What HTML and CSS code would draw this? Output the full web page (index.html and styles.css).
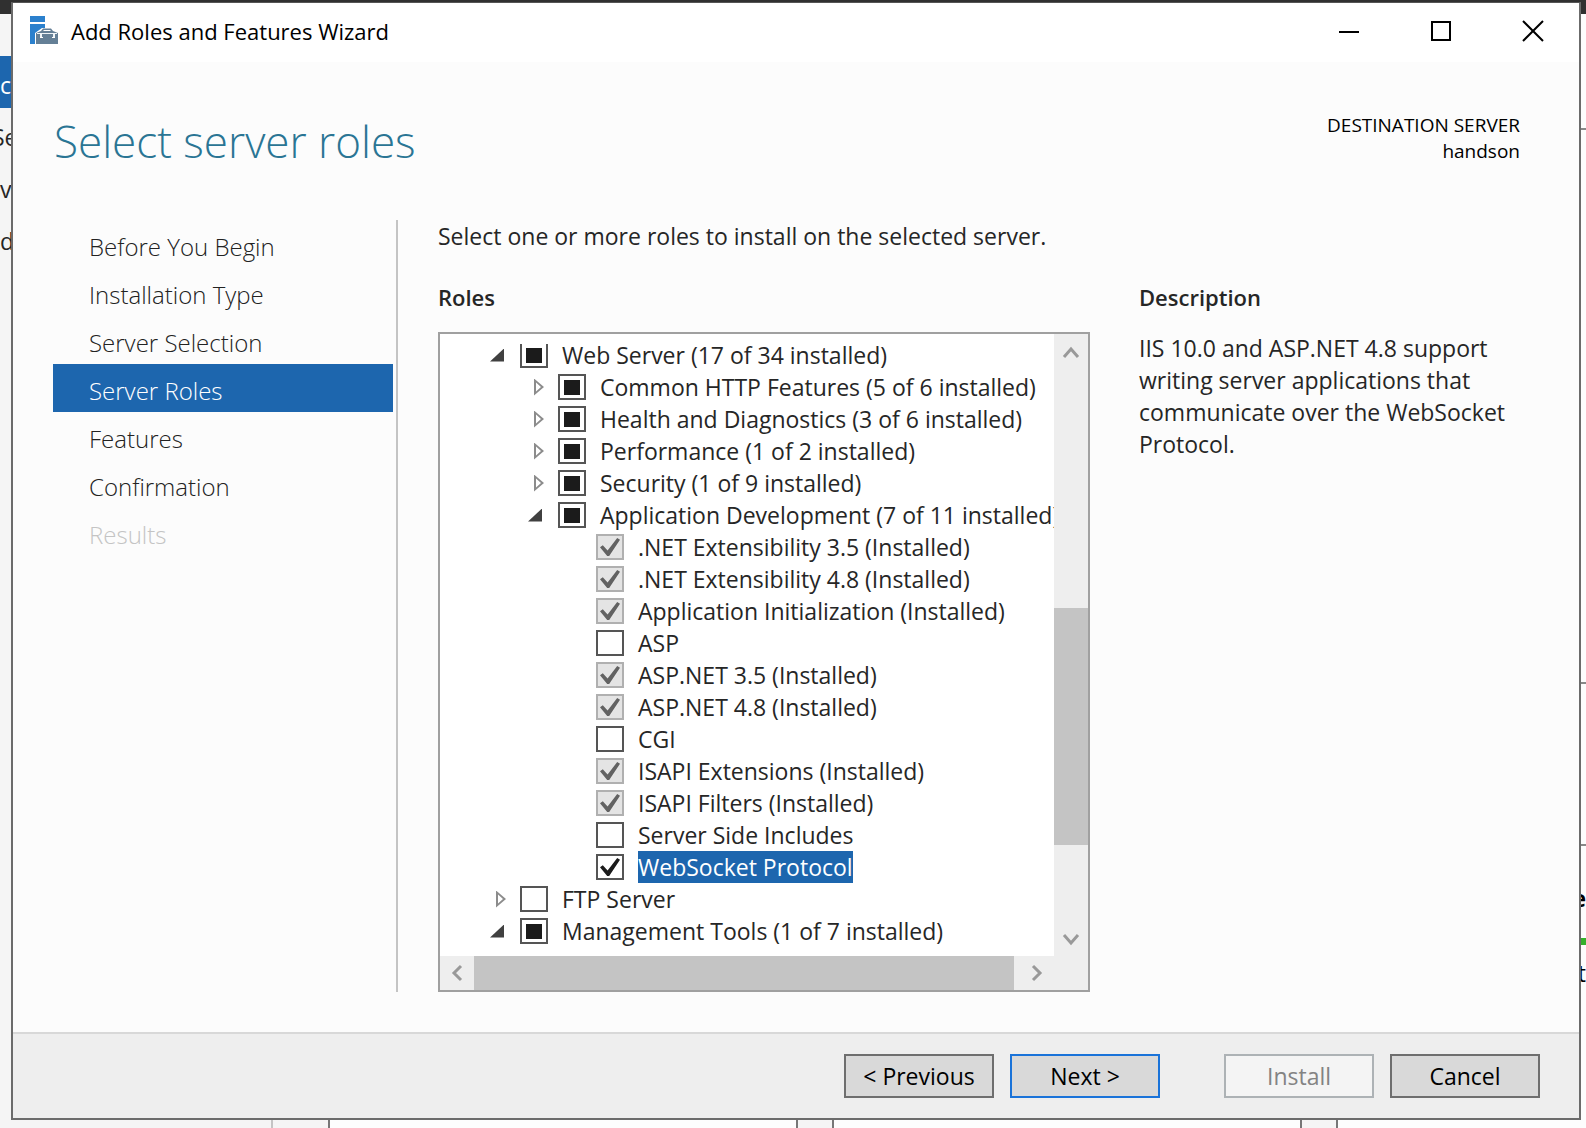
FILE: index.html
```html
<!DOCTYPE html>
<html lang="en">
<head>
<meta charset="utf-8">
<title>Add Roles and Features Wizard</title>
<link rel="stylesheet" href="styles.css">
</head>
<body>
<div class="manager" aria-hidden="true">
  <div class="manager-bar"></div>
  <div class="manager-body">
    <div class="manager-nav">
      <div class="manager-item current">c</div>
      <div class="manager-item wide">Se</div>
      <div class="manager-item">v</div>
      <div class="manager-item">d</div>
    </div>
    <div class="tiles">
      <div class="tile"></div>
      <div class="tile"></div>
      <div class="tile last">
        <div class="band intro"></div>
        <div class="band hero"></div>
        <div class="band gap"></div>
        <div class="band status"><span class="bold">e</span><i class="ok"></i><span>t</span></div>
      </div>
    </div>
  </div>
</div>

<div class="dialog" role="dialog" aria-labelledby="title">
  <header class="titlebar">
    <svg class="app-icon" width="30" height="30" viewBox="0 0 30 30">
      <path fill="#2b80cd" d="M0 0h15v6H0zM0 8h15v4h-3L5 17v11H0z"/>
      <path fill="#647f96" fill-rule="evenodd" d="M6 17l5-2 2-2.500h8l2 2.500 5 2v4H6zM13 15h8l-1-1h-6z"/>
      <path fill="#647f96" d="M6 20h4v2h3v-2h9v2h3v-2h3v8H6z"/>
      <path fill="#eef3f7" d="M7 17h20v1H25v3h-2v-3H12v3h-2v-3H7z"/>
    </svg>
    <span id="title" class="title">Add Roles and Features Wizard</span>
    <div class="window-buttons">
      <button type="button" aria-label="Minimize"><svg width="22" height="22" viewBox="0 0 22 22"><path d="M1 12h20"/></svg></button>
      <button type="button" aria-label="Maximize"><svg width="22" height="22" viewBox="0 0 22 22"><path d="M2 2h18v18H2z"/></svg></button>
      <button type="button" aria-label="Close"><svg width="22" height="22" viewBox="0 0 22 22"><path d="M1 1l20 20M21 1L1 21"/></svg></button>
    </div>
  </header>

  <div class="heading">
    <h1>Select server roles</h1>
    <p class="destination">DESTINATION SERVER<br>handson</p>
  </div>

  <div class="content">
    <nav class="steps">
      <a href="#">Before You Begin</a>
      <a href="#">Installation Type</a>
      <a href="#">Server Selection</a>
      <a href="#" class="active" aria-current="step">Server Roles</a>
      <a href="#">Features</a>
      <a href="#">Confirmation</a>
      <a class="disabled" aria-disabled="true">Results</a>
    </nav>

    <main class="panel">
      <p class="lead">Select one or more roles to install on the selected server.</p>
      <div class="columns">
        <section class="roles">
          <h2>Roles</h2>
          <div class="tree">
            <div class="viewport">
              <ul>
                <li class="l1"><i class="open"></i><label><input type="checkbox" class="partial"><span>Web Server (17 of 34 installed)</span></label></li>
                <li class="l2"><i class="closed"></i><label><input type="checkbox" class="partial"><span>Common HTTP Features (5 of 6 installed)</span></label></li>
                <li class="l2"><i class="closed"></i><label><input type="checkbox" class="partial"><span>Health and Diagnostics (3 of 6 installed)</span></label></li>
                <li class="l2"><i class="closed"></i><label><input type="checkbox" class="partial"><span>Performance (1 of 2 installed)</span></label></li>
                <li class="l2"><i class="closed"></i><label><input type="checkbox" class="partial"><span>Security (1 of 9 installed)</span></label></li>
                <li class="l2"><i class="open"></i><label><input type="checkbox" class="partial"><span>Application Development (7 of 11 installed)</span></label></li>
                <li class="l3"><i></i><label><input type="checkbox" checked disabled><span>.NET Extensibility 3.5 (Installed)</span></label></li>
                <li class="l3"><i></i><label><input type="checkbox" checked disabled><span>.NET Extensibility 4.8 (Installed)</span></label></li>
                <li class="l3"><i></i><label><input type="checkbox" checked disabled><span>Application Initialization (Installed)</span></label></li>
                <li class="l3"><i></i><label><input type="checkbox"><span>ASP</span></label></li>
                <li class="l3"><i></i><label><input type="checkbox" checked disabled><span>ASP.NET 3.5 (Installed)</span></label></li>
                <li class="l3"><i></i><label><input type="checkbox" checked disabled><span>ASP.NET 4.8 (Installed)</span></label></li>
                <li class="l3"><i></i><label><input type="checkbox"><span>CGI</span></label></li>
                <li class="l3"><i></i><label><input type="checkbox" checked disabled><span>ISAPI Extensions (Installed)</span></label></li>
                <li class="l3"><i></i><label><input type="checkbox" checked disabled><span>ISAPI Filters (Installed)</span></label></li>
                <li class="l3"><i></i><label><input type="checkbox"><span>Server Side Includes</span></label></li>
                <li class="l3"><i></i><label><input type="checkbox" checked><span class="selected">WebSocket Protocol</span></label></li>
                <li class="l1"><i class="closed"></i><label><input type="checkbox"><span>FTP Server</span></label></li>
                <li class="l1"><i class="open"></i><label><input type="checkbox" class="partial"><span>Management Tools (1 of 7 installed)</span></label></li>
              </ul>
            </div>
            <div class="vbar">
              <svg width="34" height="34" viewBox="0 0 34 34"><path d="M10 23l7-8 7 8"/></svg>
              <div class="vtrack"><div class="vthumb"></div></div>
              <svg width="34" height="34" viewBox="0 0 34 34"><path d="M10 13l7 8 7-8"/></svg>
            </div>
            <div class="hbar">
              <svg width="34" height="34" viewBox="0 0 34 34"><path d="M21 10l-7 7 7 7"/></svg>
              <div class="hthumb"></div>
              <svg width="40" height="34" viewBox="0 0 40 34"><path d="M19 10l7 7-7 7"/></svg>
            </div>
            <div class="corner"></div>
          </div>
        </section>
        <section class="description">
          <h2>Description</h2>
          <p>IIS 10.0 and ASP.NET 4.8 support writing server applications that communicate over the WebSocket Protocol.</p>
        </section>
      </div>
    </main>
  </div>

  <footer class="actions">
    <button type="button">&lt; Previous</button>
    <button type="button" class="primary">Next &gt;</button>
    <button type="button" class="install" disabled>Install</button>
    <button type="button">Cancel</button>
  </footer>
</div>
</body>
</html>
```
FILE: styles.css
```css
* { box-sizing: border-box; }
body {
  margin: 0;
  padding: 2px 5px 8px 11px;
  min-height: 100vh;
  display: flex;
  font: 23px/32px "Open Sans", "Noto Sans", sans-serif;
  color: #262626;
}
h1, h2, p, ul { margin: 0; padding: 0; font-weight: normal; }
button { font: inherit; color: #000; }

/* Server Manager window behind the wizard */
.manager {
  position: fixed;
  inset: 0;
  z-index: -1;
  display: flex;
  flex-direction: column;
  overflow: hidden;
  background: #f5f5f5;
}
.manager-bar { height: 14px; background: #303030; }
.manager-body { flex: 1; display: flex; }
.manager-nav { flex: none; width: 273px; padding-top: 42px; border-right: 2px solid #c4c4c4; }
.manager-item { height: 52px; line-height: 58px; }
.manager-item.wide { text-indent: -8px; }
.manager-item.current { background: #1d66ae; color: #fff; }
.tiles { flex: 1; min-width: 0; display: flex; gap: 34px; padding-left: 55px; }
.tile { flex: none; width: 470px; background: #fdfdfd; border: solid #777; border-width: 0 2px; }
.tile.last { flex: 1; width: auto; border-right: 0; text-align: right; }
.band { border-bottom: 2px solid #888; }
.intro { height: 116px; }
.hero { height: 554px; }
.gap { height: 162px; }
.status { border: 0; padding-top: 34px; display: grid; line-height: 36px; color: #000; }
.bold { font-weight: 700; }
.ok { height: 7px; margin: 22px 0 10px; background: #35b02b; }

.dialog {
  flex: 1;
  display: flex;
  flex-direction: column;
  background: #fcfcfc;
  border: 2px solid #6b6b6b;
  border-top: 1px solid #555;
}
.titlebar { display: flex; align-items: center; height: 59px; padding: 0 0 4px 17px; background: #fff; }
.app-icon { margin-right: 11px; }
.title { flex: 1; font-size: 22px; color: #000; }
.window-buttons { display: flex; }
.window-buttons button { width: 92px; height: 55px; padding: 0; border: 0; background: none; }
.window-buttons svg { display: block; margin: 0 auto; fill: none; stroke: #000; stroke-width: 2; }

.heading { display: flex; justify-content: space-between; padding: 47px 59px 0 41px; height: 158px; }
h1 { font-size: 44px; line-height: 64px; font-weight: 300; color: #2a7594; }
.destination { padding-top: 3px; font-size: 19px; line-height: 26px; text-align: right; color: #000; }

.content { flex: 1; display: flex; padding: 0 58px 40px 40px; }
.steps { width: 345px; padding-right: 3px; border-right: 2px solid #c4c4c4; font-size: 24px; font-weight: 300; }
.steps a { display: block; height: 48px; padding-left: 36px; line-height: 54px; color: #222; text-decoration: none; }
.steps a.active { background: #1d66ae; color: #fff; }
.steps a.disabled { color: #c4c4c4; }

.panel { flex: 1; display: flex; flex-direction: column; padding-left: 40px; }
.columns { flex: 1; display: flex; justify-content: space-between; gap: 49px; }
.roles { flex: 1; min-width: 0; display: flex; flex-direction: column; }
h2 { font-size: 22px; line-height: 32px; font-weight: 600; padding: 29px 0 19px; }
.description { width: 382px; }

.tree {
  flex: 1;
  display: grid;
  grid-template-columns: minmax(0, 1fr) 34px;
  grid-template-rows: 1fr 34px;
  background: #fff;
  border: 2px solid #a0a0a0;
}
.viewport { overflow: hidden; margin: 10px 0 8px; }
.viewport ul { margin-top: -5px; list-style: none; }
.viewport li { display: flex; align-items: center; height: 32px; white-space: nowrap; }
.l1 { padding-left: 50px; }
.l2 { padding-left: 88px; }
.l3 { padding-left: 126px; }
li i { width: 30px; flex: none; }
.open::before { content: ""; display: block; width: 14px; height: 13px; background: #404040; clip-path: polygon(100% 0, 100% 100%, 0 100%); }
.closed { padding-left: 6px; }
.closed::before {
  content: "";
  display: block;
  width: 10px;
  height: 17px;
  background: #8c8c8c;
  clip-path: polygon(0 0, 100% 50%, 0 100%, 0 0, 2px 4px, 2px 13px, 7px 50%, 2px 4px);
}
label { display: flex; align-items: center; }
input {
  appearance: none;
  display: grid;
  place-items: center;
  width: 28px;
  height: 26px;
  margin: 0 14px 0 0;
  flex: none;
  border: 2px solid #555;
  background: #fff;
}
.partial::before { content: ""; width: 16px; height: 15px; background: #1b1b1b; }
input:checked::before {
  content: "";
  width: 20px;
  height: 18px;
  background: #1b1b1b;
  clip-path: polygon(0 52%, 14% 40%, 38% 70%, 86% 0, 100% 10%, 46% 100%, 36% 100%);
}
input:disabled { background: #e4e4e4; border-color: #b0b0b0; }
input:disabled::before { background: #626262; }
.selected { background: #1d66ae; color: #fff; }

.vbar { display: flex; flex-direction: column; background: #eee; }
.vtrack { flex: 1; display: grid; grid-template-rows: 240fr 237fr 77fr; }
.vthumb { grid-row: 2; background: #c4c4c4; }
.hbar { display: flex; background: #eee; }
.hthumb { flex: 1; background: #c4c4c4; }
.corner { background: #eee; }
.tree svg { flex: none; fill: none; stroke: #999; stroke-width: 3; }

.actions {
  display: flex;
  justify-content: flex-end;
  gap: 16px;
  padding: 20px 39px 20px 0;
  border-top: 2px solid #d8d8d8;
  background: #eee;
}
.actions button { width: 150px; height: 44px; padding: 0; border: 2px solid #6e6e6e; background: #d9d9d9; }
.actions .primary { border-color: #1a73d9; }
.actions .install { margin-left: 48px; border-color: #adb2b5; background: #f4f4f4; color: #838383; }
```
